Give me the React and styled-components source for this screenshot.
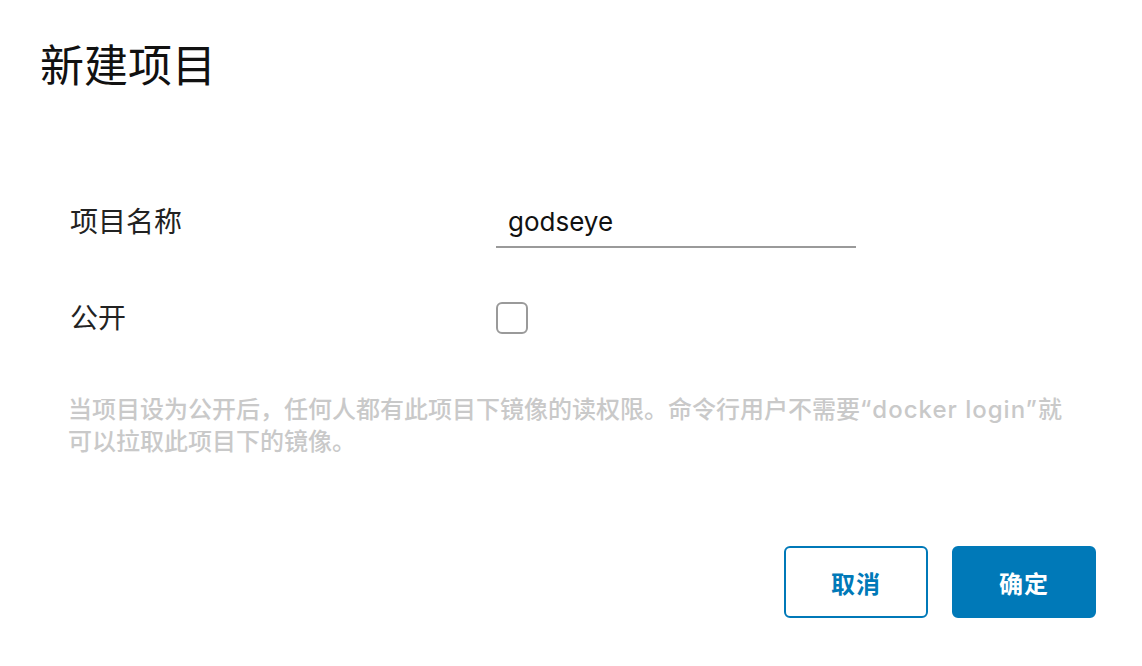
import React from "react";
import styled, { createGlobalStyle } from "styled-components";

const Global = createGlobalStyle`
  html, body { margin: 0; padding: 0; background: #fff; }
  body { font-family: "Inter", "Noto Sans CJK SC", sans-serif; }
`;

const Page = styled.div`
  width: 1142px;
  height: 666px;
  box-sizing: border-box;
  padding: 34px 46px 0 40px;
  display: flex;
  flex-direction: column;
`;

const Title = styled.h3`
  margin: 0;
  font-size: 44px;
  line-height: 64px;
  font-weight: 400;
  color: #111;
`;

const Form = styled.form`
  margin-top: 94px;
  padding-left: 28px;
  display: flex;
  flex-direction: column;
`;

const Row = styled.div`
  display: grid;
  grid-template-columns: 428px 360px;
  align-items: center;
  height: ${(p) => p.$h}px;
  margin-bottom: ${(p) => p.$mb || 0}px;
`;

const Label = styled.label`
  padding-left: 2px;
  font-size: 28px;
  line-height: 40px;
  color: #222;
`;

const TextInput = styled.input`
  box-sizing: border-box;
  width: 360px;
  height: 52px;
  border: none;
  border-bottom: 2px solid #9a9a9a;
  padding: 0 12px;
  font-family: "Inter", "Noto Sans CJK SC", sans-serif;
  font-size: 26px;
  color: #111;
  background: transparent;
  outline: none;
`;

const Checkbox = styled.span`
  display: block;
  box-sizing: border-box;
  width: 32px;
  height: 32px;
  border: 2px solid #9a9a9a;
  border-radius: 6px;
`;

const Help = styled.p`
  margin: 0;
  width: 1000px;
  font-size: 24px;
  line-height: 32px;
  font-weight: 500;
  color: #c9c9c9;
`;

const Latin = styled.span`
  letter-spacing: 1px;
`;

const Footer = styled.div`
  margin-top: 88px;
  display: flex;
  justify-content: flex-end;
  gap: 24px;
`;

const Button = styled.button`
  box-sizing: border-box;
  width: 144px;
  height: 72px;
  border-radius: 6px;
  border: 2px solid #0079b8;
  background: ${(p) => (p.$primary ? "#0079b8" : "#fff")};
  color: ${(p) => (p.$primary ? "#fff" : "#0079b8")};
  font-family: "Inter", "Noto Sans CJK SC", sans-serif;
  font-size: 24px;
  font-weight: 700;
  letter-spacing: 1px;
  cursor: pointer;
`;

export default function App() {
  return (
    <>
      <Global />
      <Page>
        <Title>新建项目</Title>
        <Form onSubmit={(e) => e.preventDefault()}>
          <Row $h={60} $mb={46}>
            <Label>项目名称</Label>
            <TextInput defaultValue="godseye" />
          </Row>
          <Row $h={40} $mb={56}>
            <Label>公开</Label>
            <Checkbox />
          </Row>
          <Help>
            当项目设为公开后，任何人都有此项目下镜像的读权限。命令行用户不需要<Latin>“docker login”</Latin>就可以拉取此项目下的镜像。
          </Help>
        </Form>
        <Footer>
          <Button type="button">取消</Button>
          <Button type="button" $primary>确定</Button>
        </Footer>
      </Page>
    </>
  );
}
